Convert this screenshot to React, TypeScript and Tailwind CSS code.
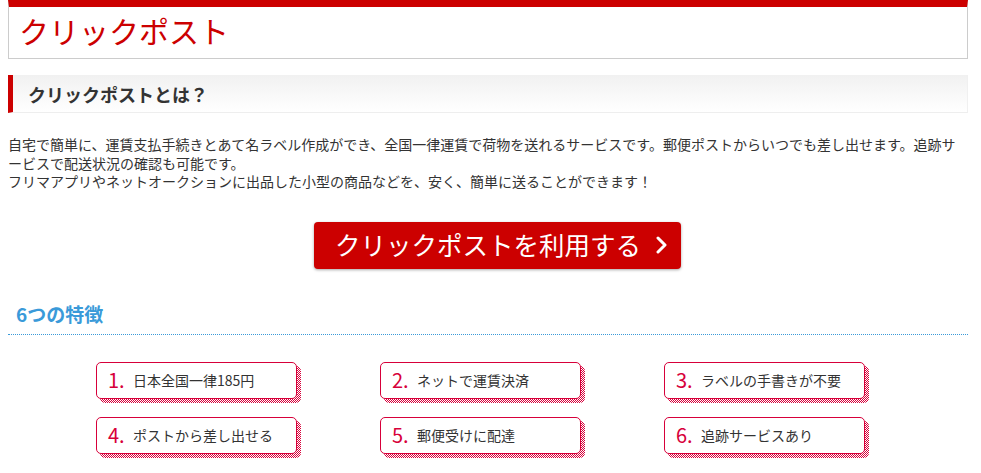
import React from "react";

const features = [
  { n: "1.", t: "日本全国一律185円" },
  { n: "2.", t: "ネットで運賃決済" },
  { n: "3.", t: "ラベルの手書きが不要" },
  { n: "4.", t: "ポストから差し出せる" },
  { n: "5.", t: "郵便受けに配達" },
  { n: "6.", t: "追跡サービスあり" },
];

export default function App() {
  return (
    <div
      className="bg-white w-[981px] h-[473px] overflow-hidden"
      style={{ fontFamily: '"Noto Sans CJK JP", "Noto Sans", sans-serif' }}
    >
      <div className="ml-2 w-[960px]">
        {/* Header */}
        <div className="border-t-[7px] border-t-[#cc0000] border-x border-b border-[#cccccc] h-[59px] pl-[10px] flex items-center pb-[5px]">
          <h1 className="text-[30px] leading-[36px] text-[#cc0000] font-normal">クリックポスト</h1>
        </div>

        {/* Section heading */}
        <div className="mt-[16px] h-[38px] border-l-[5px] border-l-[#cc0000] border-b border-b-[#eeeeee] border-r border-r-[#f0f0f0] bg-gradient-to-b from-[#f1f1f1] to-[#ffffff] flex items-center pl-[15px]">
          <h2 className="text-[18px] leading-[24px] font-bold text-[#333333]">クリックポストとは？</h2>
        </div>

        {/* Paragraph */}
        <p className="mt-[22px] text-[14px] leading-[18.5px] text-[#333333]">
          自宅で簡単に、運賃支払手続きとあて名ラベル作成ができ、全国一律運賃で荷物を送れるサービスです。郵便ポストからいつでも差し出せます。追跡サービスで配送状況の確認も可能です。
          <br />
          フリマアプリやネットオークションに出品した小型の商品などを、安く、簡単に送ることができます！
        </p>

        {/* Button */}
        <div className="mt-[31px] ml-[306px]">
          <div className="w-[367px] h-[47px] bg-[#cc0000] rounded-[4px] shadow-[0_1px_3px_rgba(0,0,0,0.35)] flex items-center pl-[21px] text-white">
            <span className="text-[25.5px] leading-[32px] pb-[3px]">クリックポストを利用する</span>
            <svg width="12" height="18" viewBox="0 0 12 18" className="ml-[15px]">
              <path d="M2 2 L9 9 L2 16" fill="none" stroke="#ffffff" strokeWidth="3" strokeLinecap="round" strokeLinejoin="round" />
            </svg>
          </div>
        </div>

        {/* 6つの特徴 */}
        <div className="mt-[33px] pl-[8px] pb-[8px] border-b border-dotted border-[#3a9ad9]">
          <h3 className="text-[19px] leading-[24px] font-bold text-[#3a9ad9]">6つの特徴</h3>
        </div>

        <div className="ml-[88px] mt-[27px] grid grid-cols-[205px_205px_205px] gap-x-[79px] gap-y-[14px]">
          {features.map((f) => (
            <div key={f.n} className="relative w-[205px] h-[41px]">
              <div className="absolute left-[4px] top-[4px] w-[201px] h-[37px] rounded-[5px] bg-[conic-gradient(#d7003a_25%,#ffffff_0_50%,#d7003a_0_75%,#ffffff_0)] bg-[length:2px_2px]" />
              <div className="relative w-[201px] h-[37px] bg-white border border-[#d7003a] rounded-[5px] flex items-center pl-[11px]">
                <span className="text-[20px] leading-[24px] text-[#d7003a] w-[25px]">{f.n}</span>
                <span className="text-[14px] leading-[20px] text-[#333333]">{f.t}</span>
              </div>
            </div>
          ))}
        </div>
      </div>
    </div>
  );
}
